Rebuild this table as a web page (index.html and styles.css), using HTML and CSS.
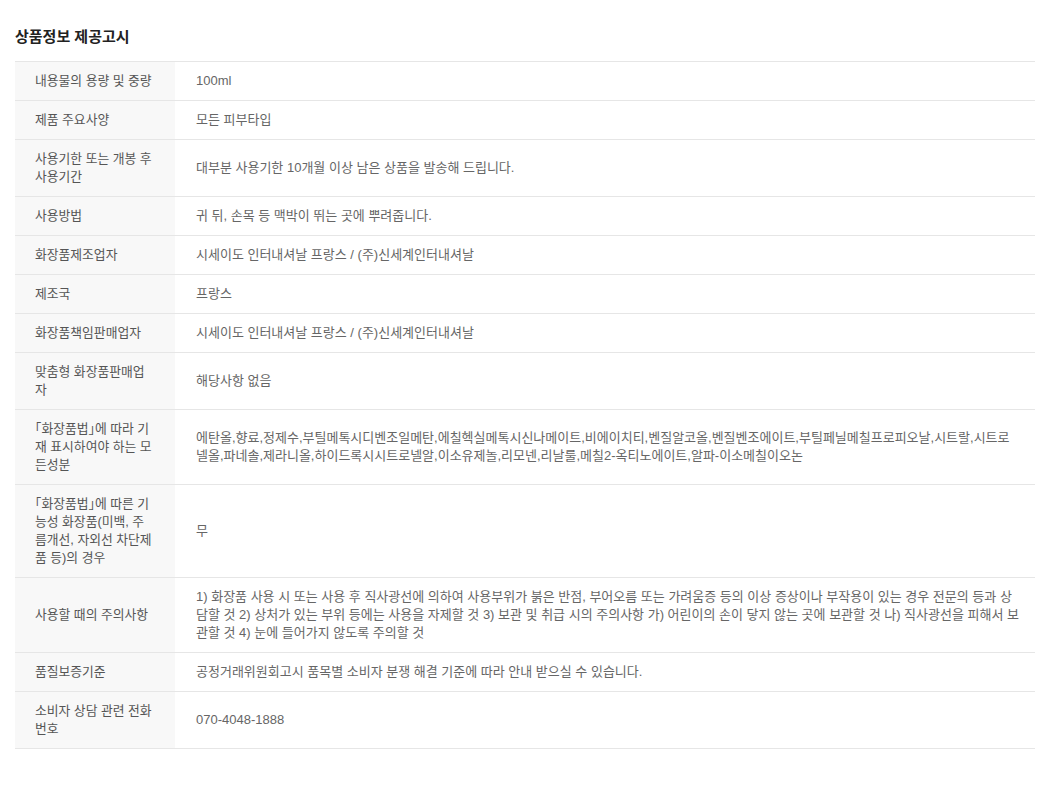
FILE: index.html
```html
<!DOCTYPE html>
<html lang="ko">

<head>
    <meta charset="UTF-8">
    <meta name="viewport" content="width=device-width, initial-scale=1.0">
    <title>상품정보 제공고시</title>
    <link rel="stylesheet" href="styles.css">
</head>

<body>
    <div class="notice">
        <h3 class="notice-title">상품정보 제공고시</h3>
        <table class="info-table">
            <tbody>
                <tr>
                    <th>내용물의 용량 및 중량</th>
                    <td>100ml</td>
                </tr>
                <tr>
                    <th>제품 주요사양</th>
                    <td>모든 피부타입</td>
                </tr>
                <tr>
                    <th>사용기한 또는 개봉 후 사용기간</th>
                    <td>대부분 사용기한 10개월 이상 남은 상품을 발송해 드립니다.</td>
                </tr>
                <tr>
                    <th>사용방법</th>
                    <td>귀 뒤, 손목 등 맥박이 뛰는 곳에 뿌려줍니다.</td>
                </tr>
                <tr>
                    <th>화장품제조업자</th>
                    <td>시세이도 인터내셔날 프랑스 / (주)신세계인터내셔날</td>
                </tr>
                <tr>
                    <th>제조국</th>
                    <td>프랑스</td>
                </tr>
                <tr>
                    <th>화장품책임판매업자</th>
                    <td>시세이도 인터내셔날 프랑스 / (주)신세계인터내셔날</td>
                </tr>
                <tr>
                    <th>맞춤형 화장품판매업자</th>
                    <td>해당사항 없음</td>
                </tr>
                <tr>
                    <th>「화장품법」에 따라 기재 표시하여야 하는 모든성분</th>
                    <td>에탄올,향료,정제수,부틸메톡시디벤조일메탄,에칠헥실메톡시신나메이트,비에이치티,벤질알코올,벤질벤조에이트,부틸페닐메칠프로피오날,시트랄,시트로넬올,파네솔,제라니올,하이드록시시트로넬알,이소유제놀,리모넨,리날룰,메칠2-옥티노에이트,알파-이소메칠이오논</td>
                </tr>
                <tr>
                    <th>「화장품법」에 따른 기능성 화장품(미백, 주름개선, 자외선 차단제품 등)의 경우</th>
                    <td>무</td>
                </tr>
                <tr>
                    <th>사용할 때의 주의사항</th>
                    <td>1) 화장품 사용 시 또는 사용 후 직사광선에 의하여 사용부위가 붉은 반점, 부어오름 또는 가려움증 등의 이상 증상이나 부작용이 있는 경우 전문의 등과 상담할 것 2) 상처가 있는 부위 등에는 사용을 자제할 것 3) 보관 및 취급 시의 주의사항 가) 어린이의 손이 닿지 않는 곳에 보관할 것 나) 직사광선을 피해서 보관할 것 4) 눈에 들어가지 않도록 주의할 것</td>
                </tr>
                <tr>
                    <th>품질보증기준</th>
                    <td>공정거래위원회고시 품목별 소비자 분쟁 해결 기준에 따라 안내 받으실 수 있습니다.</td>
                </tr>
                <tr>
                    <th>소비자 상담 관련 전화번호</th>
                    <td>070-4048-1888</td>
                </tr>
            </tbody>
        </table>
    </div>
</body>

</html>
```

FILE: styles.css
```css
body {
    margin: 0;
    background-color: #fff;
    font-family: "Liberation Sans", "Noto Sans CJK KR", sans-serif;
    color: #666;
}

.notice {
    padding: 27px 21px 40px 15px;
}

.notice-title {
    margin: 0 0 14px 0;
    font-size: 15px;
    line-height: 20px;
    font-weight: 700;
    color: #222;
}

.info-table {
    width: 100%;
    border-collapse: collapse;
    border-top: 1px solid #e6e6e6;
    font-size: 12.8px;
    line-height: 18px;
}

.info-table tr {
    border-bottom: 1px solid #e6e6e6;
}

.info-table th {
    width: 120px;
    padding: 10px 20px;
    text-align: left;
    vertical-align: middle;
    font-weight: 400;
    color: #555;
    background-color: #f8f8f8;
    word-break: break-all;
    /* half width 「 」 brackets */
    font-feature-settings: "halt";
}

.info-table td {
    padding: 10px 15px 10px 21px;
    vertical-align: middle;
    font-size: 13px;
    color: #666;
    word-break: break-all;
}
```
